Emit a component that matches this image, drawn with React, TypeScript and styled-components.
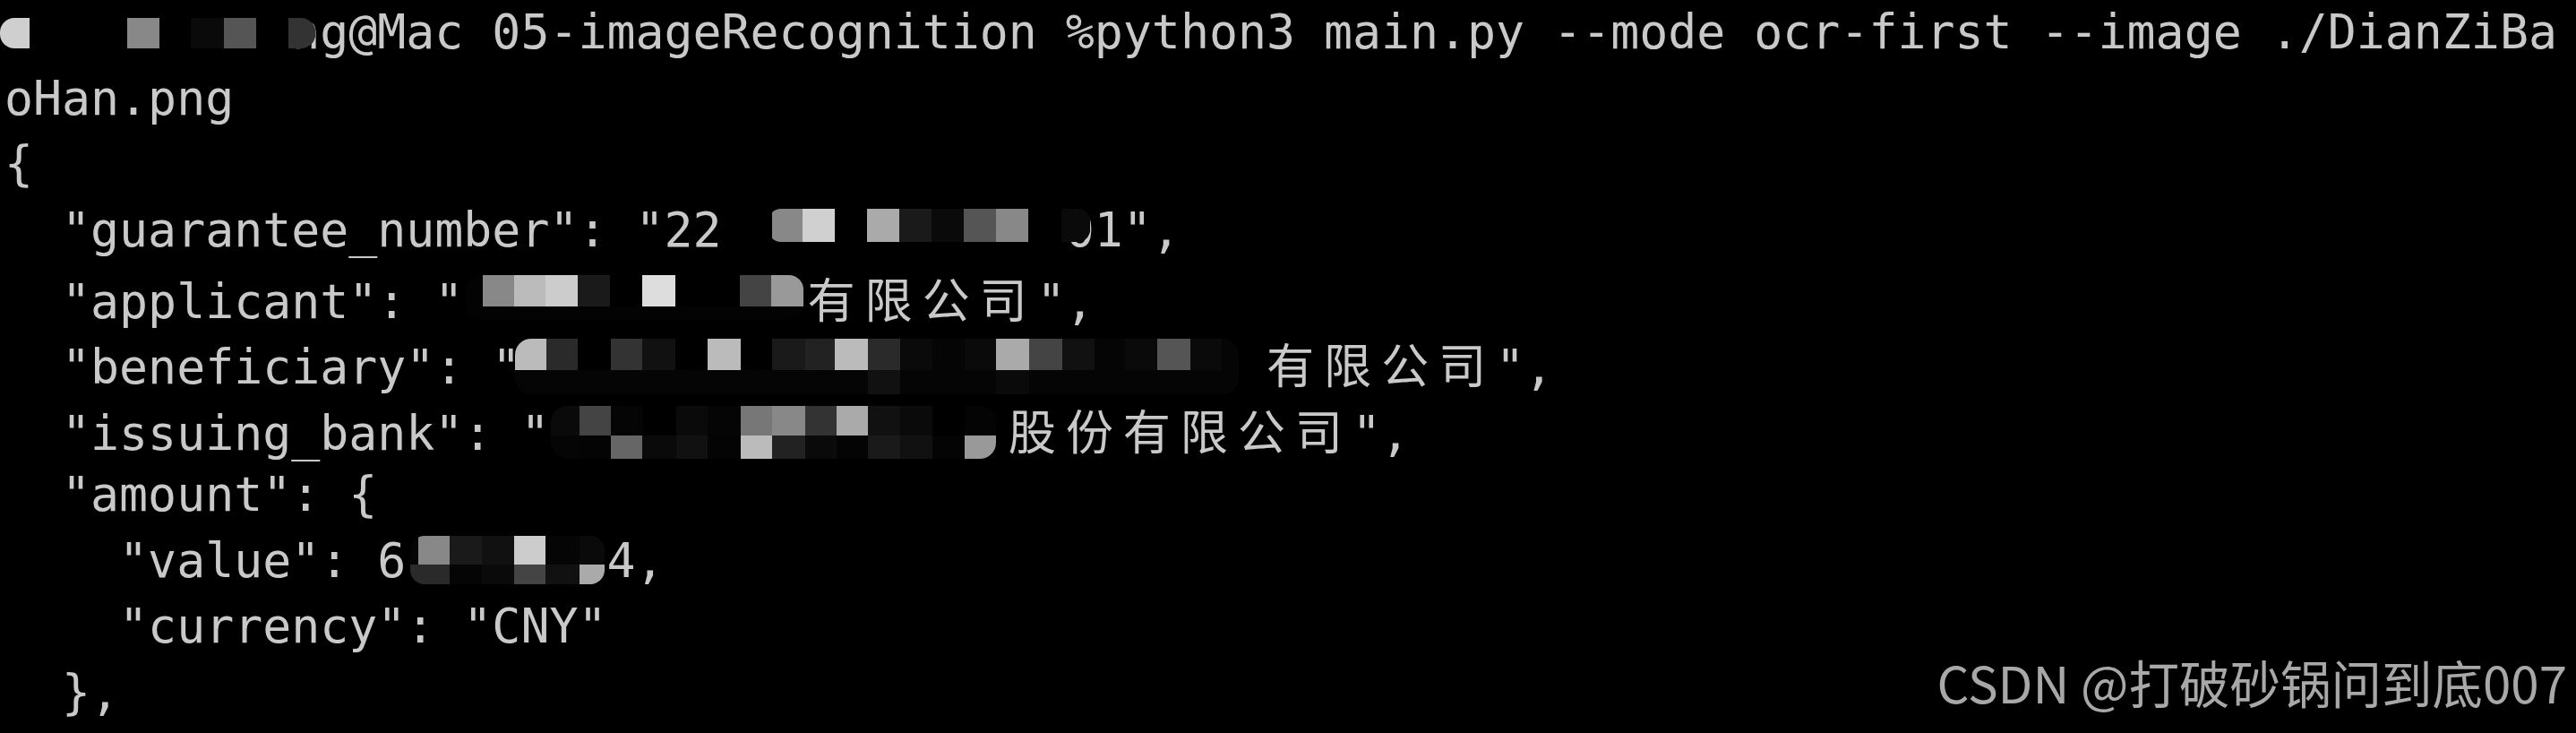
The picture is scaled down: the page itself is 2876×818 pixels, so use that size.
import React from "react";
import styled, { createGlobalStyle } from "styled-components";

const GlobalStyle = createGlobalStyle`
  html, body {
    margin: 0;
    padding: 0;
    background: #000;
  }
  body {
    width: 2876px;
    height: 818px;
    overflow: hidden;
  }
`;

const Screen = styled.div`
  position: relative;
  width: 2876px;
  height: 818px;
  background: #000;
  overflow: hidden;
`;

const Terminal = styled.pre`
  margin: 0;
  padding: 0 0 0 5px;
  display: flex;
  flex-direction: column;
  font-family: "DejaVu Sans Mono", "Noto Sans CJK SC", monospace;
  font-size: 53.2px;
  color: #c9c9c9;
`;

const Line = styled.div`
  height: 73.7px;
  line-height: 73.7px;
  white-space: pre;
`;

const Wide = styled.span`
  font-family: "Noto Sans CJK SC", sans-serif;
  letter-spacing: 10.8px;
`;

const Overlay = styled.svg`
  position: absolute;
  left: 0;
  top: 0;
  pointer-events: none;
`;

const Watermark = styled.div`
  position: absolute;
  right: 10px;
  bottom: 30px;
  font-family: "Noto Sans CJK SC", "Liberation Sans", sans-serif;
  font-size: 56.5px;
  line-height: 56.5px;
  color: #a8a8a8;
  white-space: nowrap;
`;

const lines: string[] = [
  "          ng@Mac 05-imageRecognition %python3 main.py --mode ocr-first --image ./DianZiBa",
  "oHan.png",
  "{",
  '  "guarantee_number": "22            01",',
  '  "applicant": "            有限公司",',
  '  "beneficiary": "                          有限公司",',
  '  "issuing_bank": "                股份有限公司",',
  '  "amount": {',
  '    "value": 6       4,',
  '    "currency": "CNY"',
  "  },",
];

const CJK = /([\u4e00-\u9fff]+)/;

function renderLine(text: string) {
  return text.split(CJK).map((part, i) =>
    CJK.test(part) ? <Wide key={i}>{part}</Wide> : <React.Fragment key={i}>{part}</React.Fragment>
  );
}

type Cell = [number, number, number, number, string];
type Redaction = { x: number; y: number; w: number; h: number; r: number; bg: string; cells: Cell[] };

const redactions: Redaction[] = [
  {
    x: 0, y: 20, w: 352, h: 34, r: 16, bg: "#000",
    cells: [
      [0, 20, 33, 34, "#cfcfcf"],
      [142, 20, 36, 34, "#888"],
      [213, 20, 37, 34, "#0a0a0a"],
      [250, 20, 36, 34, "#555"],
      [322, 20, 30, 34, "#333"],
    ],
  },
  {
    x: 858, y: 233, w: 359, h: 37, r: 14, bg: "#000",
    cells: [
      [862, 233, 34, 37, "#888"],
      [896, 233, 36, 37, "#d0d0d0"],
      [968, 233, 36, 37, "#aaa"],
      [1004, 233, 36, 37, "#1a1a1a"],
      [1040, 233, 36, 37, "#0a0a0a"],
      [1076, 233, 36, 37, "#555"],
      [1112, 233, 36, 37, "#888"],
      [1185, 233, 32, 37, "#0a0a0a"],
    ],
  },
  {
    x: 520, y: 307, w: 377, h: 50, r: 16, bg: "#030303",
    cells: [
      [539, 307, 35, 35, "#888"],
      [574, 307, 35, 35, "#bbb"],
      [609, 307, 36, 35, "#ccc"],
      [645, 307, 36, 35, "#1a1a1a"],
      [681, 307, 36, 35, "#000"],
      [717, 307, 37, 35, "#ddd"],
      [754, 307, 72, 35, "#000"],
      [826, 307, 35, 35, "#444"],
      [861, 307, 36, 35, "#999"],
    ],
  },
  {
    x: 575, y: 378, w: 808, h: 62, r: 18, bg: "#050505",
    cells: [
      [575, 378, 35, 35, "#bbb"],
      [610, 378, 35, 35, "#2a2a2a"],
      [645, 378, 37, 35, "#000"],
      [682, 378, 35, 35, "#333"],
      [717, 378, 37, 35, "#111"],
      [754, 378, 36, 35, "#000"],
      [790, 378, 37, 35, "#bbb"],
      [827, 378, 35, 35, "#000"],
      [862, 378, 37, 35, "#1a1a1a"],
      [899, 378, 33, 35, "#222"],
      [932, 378, 37, 35, "#bbb"],
      [969, 378, 36, 35, "#2a2a2a"],
      [1005, 378, 36, 35, "#0a0a0a"],
      [1041, 378, 36, 35, "#050505"],
      [1077, 378, 35, 35, "#0a0a0a"],
      [1112, 378, 37, 35, "#aaa"],
      [1149, 378, 37, 35, "#444"],
      [1186, 378, 36, 35, "#111"],
      [1222, 378, 34, 35, "#050505"],
      [1256, 378, 36, 35, "#0a0a0a"],
      [1292, 378, 37, 35, "#555"],
      [1329, 378, 35, 35, "#0a0a0a"],
      [969, 413, 36, 27, "#111"],
      [1112, 413, 37, 27, "#0a0a0a"],
    ],
  },
  {
    x: 615, y: 453, w: 497, h: 59, r: 18, bg: "#040404",
    cells: [
      [615, 453, 32, 33, "#0a0a0a"],
      [647, 453, 35, 33, "#444"],
      [682, 453, 35, 33, "#050505"],
      [717, 453, 38, 33, "#000"],
      [755, 453, 35, 33, "#0a0a0a"],
      [790, 453, 37, 33, "#050505"],
      [827, 453, 35, 33, "#777"],
      [862, 453, 37, 33, "#888"],
      [899, 453, 35, 33, "#333"],
      [934, 453, 35, 33, "#aaa"],
      [969, 453, 36, 33, "#111"],
      [1005, 453, 36, 33, "#0a0a0a"],
      [1041, 453, 36, 33, "#000"],
      [615, 486, 32, 26, "#050505"],
      [682, 486, 35, 26, "#666"],
      [717, 486, 38, 26, "#0a0a0a"],
      [755, 486, 35, 26, "#111"],
      [827, 486, 35, 26, "#bbb"],
      [862, 486, 37, 26, "#222"],
      [899, 486, 35, 26, "#0a0a0a"],
      [969, 486, 36, 26, "#1a1a1a"],
      [1005, 486, 36, 26, "#111"],
      [1077, 486, 35, 26, "#999"],
    ],
  },
  {
    x: 458, y: 598, w: 217, h: 54, r: 16, bg: "#050505",
    cells: [
      [467, 598, 35, 32, "#888"],
      [502, 598, 36, 32, "#1a1a1a"],
      [538, 598, 36, 32, "#111"],
      [574, 598, 35, 32, "#ccc"],
      [609, 598, 38, 32, "#050505"],
      [647, 598, 28, 32, "#0a0a0a"],
      [458, 630, 44, 22, "#2a2a2a"],
      [502, 630, 36, 22, "#050505"],
      [538, 630, 36, 22, "#0a0a0a"],
      [574, 630, 35, 22, "#444"],
      [609, 630, 38, 22, "#111"],
      [647, 630, 28, 22, "#aaa"],
    ],
  },
];

function Redactions() {
  return (
    <Overlay width={2876} height={818} viewBox="0 0 2876 818">
      <defs>
        {redactions.map((r, i) => (
          <clipPath id={`blob-${i}`} key={i}>
            <rect x={r.x} y={r.y} width={r.w} height={r.h} rx={r.r} ry={r.r} />
          </clipPath>
        ))}
      </defs>
      {redactions.map((r, i) => (
        <g clipPath={`url(#blob-${i})`} key={i}>
          <rect x={r.x} y={r.y} width={r.w} height={r.h} fill={r.bg} />
          {r.cells.map(([x, y, w, h, c], j) => (
            <rect key={j} x={x} y={y} width={w} height={h} fill={c} />
          ))}
        </g>
      ))}
    </Overlay>
  );
}

export default function App() {
  return (
    <>
      <GlobalStyle />
      <Screen>
        <Terminal>
          {lines.map((l, i) => (
            <Line key={i}>{renderLine(l)}</Line>
          ))}
        </Terminal>
        <Redactions />
        <Watermark>CSDN @打破砂锅问到底007</Watermark>
      </Screen>
    </>
  );
}
